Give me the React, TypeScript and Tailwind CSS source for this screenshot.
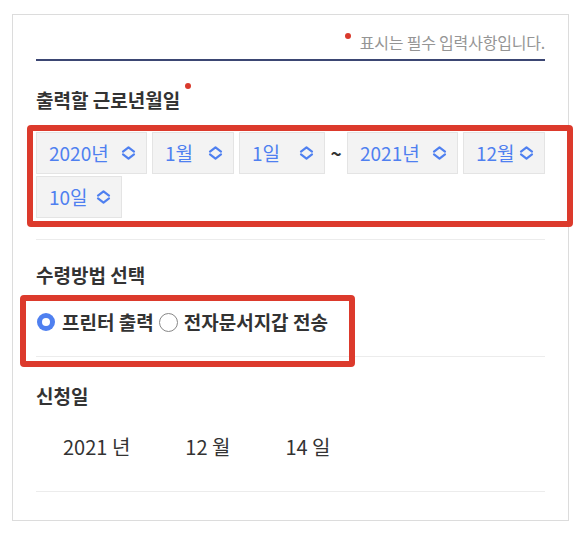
import React from "react";

const fontStack = {
    fontFamily: '"Noto Sans CJK KR", "Noto Sans", sans-serif',
};

type SelectItem = { label: string; width: string } | { tilde: true };

const periodSelects: SelectItem[] = [
    { label: "2020년", width: "w-[111px]" },
    { label: "1월", width: "w-[82px]" },
    { label: "1일", width: "w-[86px]" },
    { tilde: true },
    { label: "2021년", width: "w-[111px]" },
    { label: "12월", width: "w-[82px]" },
    { label: "10일", width: "w-[86px]" },
];

function UpDownIcon() {
    return (
        <svg width="15" height="14" viewBox="0 0 15 14" fill="none">
            <path
                d="M2 5.6 L7.5 1.4 L13 5.6"
                stroke="currentColor"
                strokeWidth="2.2"
                strokeLinecap="round"
                strokeLinejoin="round"
            />
            <path
                d="M2 8.4 L7.5 12.6 L13 8.4"
                stroke="currentColor"
                strokeWidth="2.2"
                strokeLinecap="round"
                strokeLinejoin="round"
            />
        </svg>
    );
}

function RequiredDot({ className = "" }: { className?: string }) {
    return (
        <span
            className={`inline-block w-[6px] h-[6px] rounded-full bg-[#d93a2c] ${className}`}
        />
    );
}

export default function App() {
    return (
        <div className="bg-white min-h-[540px] pt-[14px]" style={fontStack}>
            <div className="ml-[12px] w-[557px] border border-[#dcdcdc] pl-[23px] pr-[23px] pt-[17px] pb-[28px]">
                {/* Required notice */}
                <div className="flex items-center justify-end h-[20px]">
                    <RequiredDot className="mr-[9px] -mt-[12px]" />
                    <span className="text-[16px] tracking-[-0.2px] text-[#959595] leading-[20px]">
                        표시는 필수 입력사항입니다.
                    </span>
                </div>
                <div className="mt-[7px] h-[2px] bg-[#3b4673]" />

                {/* Period */}
                <div className="mt-[27px] flex items-start h-[24px]">
                    <h3 className="text-[19px] font-bold text-[#333] leading-[24px]">
                        출력할 근로년월일
                    </h3>
                    <RequiredDot className="ml-[5px] -mt-[5px]" />
                </div>

                <div className="relative mt-[20px]">
                    <div className="flex flex-wrap gap-x-[5px] gap-y-[2px]">
                        {periodSelects.map((item, i) =>
                            "tilde" in item ? (
                                <div
                                    key={i}
                                    className="w-[12px] h-[42px] flex items-center justify-center text-[19px] font-bold text-[#333]"
                                >
                                    ~
                                </div>
                            ) : (
                                <div
                                    key={i}
                                    className={`${item.width} h-[42px] flex items-center justify-between pl-[12px] pr-[10px] bg-[#f3f3f3] border border-[#e4e4e4] text-[19px] text-[#4f80f0]`}
                                >
                                    <span>{item.label}</span>
                                    <UpDownIcon />
                                </div>
                            )
                        )}
                    </div>
                    <div className="absolute -left-[9px] -top-[7px] w-[546px] h-[102px] border-[6px] border-[#dc3a2c] rounded-[4px] pointer-events-none" />
                </div>

                <div className="mt-[21px] h-px bg-[#ececec]" />

                {/* Receive method */}
                <h3 className="mt-[23px] text-[19px] font-bold text-[#333] leading-[24px]">
                    수령방법 선택
                </h3>
                <div className="relative mt-[23px]">
                    <div className="flex items-center h-[24px] text-[19px] font-bold text-[#333]">
                        <span className="ml-[1px] w-[18px] h-[18px] rounded-full bg-[#4f80f0] flex items-center justify-center">
                            <span className="w-[8px] h-[8px] rounded-full bg-white" />
                        </span>
                        <span className="ml-[7px]">프린터 출력</span>
                        <span className="ml-[5px] w-[19px] h-[19px] rounded-full border-[1.5px] border-[#888]" />
                        <span className="ml-[6px]">전자문서지갑 전송</span>
                    </div>
                    <div className="mt-[22px] h-px bg-[#ececec]" />
                    <div className="absolute -left-[16px] -top-[15px] w-[335px] h-[72px] border-[6px] border-[#dc3a2c] rounded-[4px] pointer-events-none z-10" />
                </div>

                {/* Apply date */}
                <h3 className="mt-[27px] text-[19px] font-bold text-[#333] leading-[24px]">
                    신청일
                </h3>
                <div className="mt-[27px] pl-[27px] flex gap-[55px] h-[24px] items-center text-[20px] text-[#333] leading-[24px]">
                    <span>2021 년</span>
                    <span>12 월</span>
                    <span>14 일</span>
                </div>
                <div className="mt-[32px] h-px bg-[#ececec]" />
            </div>
        </div>
    );
}
